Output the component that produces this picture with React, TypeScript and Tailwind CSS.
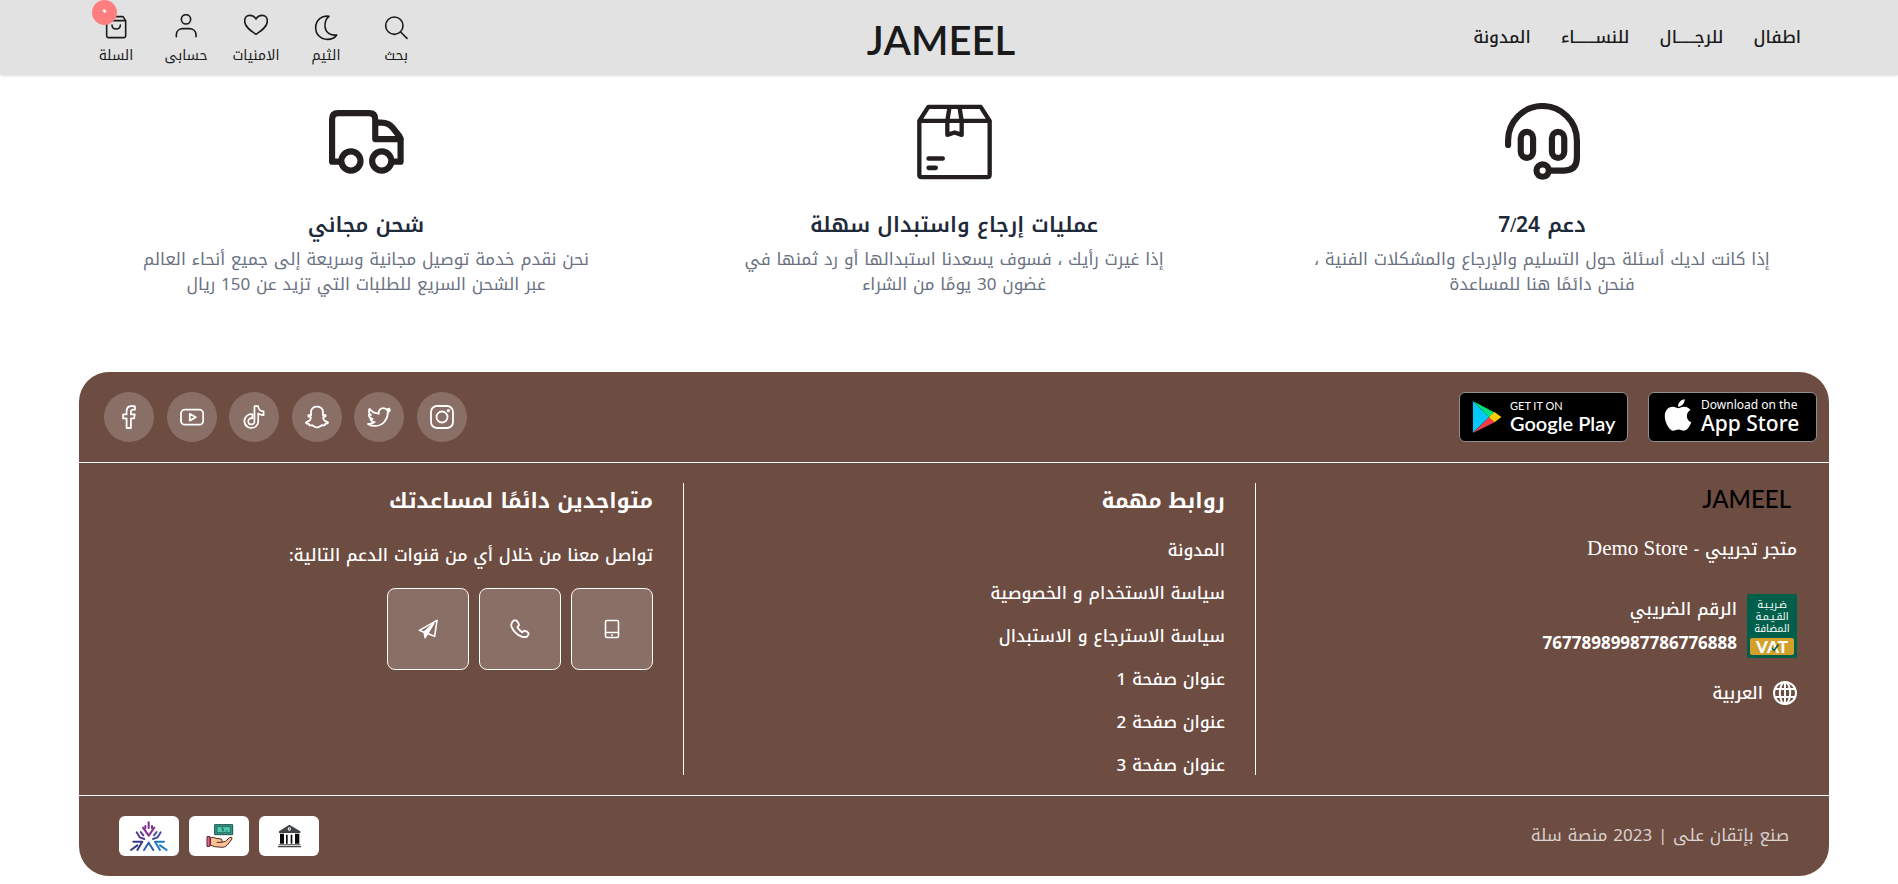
import type { ReactNode } from 'react';
import { FaApple, FaFacebookF, FaSnapchatGhost, FaTwitter } from 'react-icons/fa';
import { SiTiktok } from 'react-icons/si';

const menu = ['اطفال', 'للرجــــــال', 'للنســـــــاء', 'المدونة'];

const links = [
  'المدونة',
  'سياسة الاستخدام و الخصوصية',
  'سياسة الاسترجاع و الاستبدال',
  'عنوان صفحة 1',
  'عنوان صفحة 2',
  'عنوان صفحة 3',
];

function ToolIcon({ box, children }: { box: string; children: ReactNode }) {
  return (
    <svg viewBox={box} className="h-7 w-6" fill="none" stroke="currentColor" strokeWidth="4.8" strokeLinecap="round" strokeLinejoin="round" aria-hidden="true">
      {children}
    </svg>
  );
}

const tools: { label: string; icon: ReactNode; badge?: string }[] = [
  {
    label: 'بحث',
    icon: (
      <ToolIcon box="942 40 72 84">
        <circle cx="973" cy="75" r="26" />
        <path d="M992 94 L1011 113" />
      </ToolIcon>
    ),
  },
  {
    label: 'الثيم',
    icon: (
      <ToolIcon box="733 40 72 84">
        <path d="M778 47 C757 43 738 58 738 81 C738 101 753 116 773 116 C786 116 796 111 801 103 C782 105 768 96 766 78 C765 66 769 54 778 47 Z" />
      </ToolIcon>
    ),
  },
  {
    label: 'الامنيات',
    icon: (
      <ToolIcon box="524 38 72 84">
        <path d="M560 99 C540 86 526 75 526 59 C526 48 533 42 541 42 C549 42 556 46 560 53 C564 46 571 42 579 42 C587 42 594 48 594 59 C594 75 580 86 560 99 Z" />
      </ToolIcon>
    ),
  },
  {
    label: 'حسابى',
    icon: (
      <ToolIcon box="313 38 72 84">
        <circle cx="349" cy="54" r="14" />
        <path d="M320 106 V100 C320 89 329 82 340 82 H358 C370 82 379 89 379 100 V106" />
      </ToolIcon>
    ),
  },
  {
    label: 'السلة',
    badge: '٠',
    icon: (
      <ToolIcon box="103 40 72 84">
        <path d="M111 60 L119 48 H160 L168 60 V106 Q168 111 163 111 H116 Q111 111 111 106 Z M111 60 H168 M127 73 C127 89 152 89 152 73" />
      </ToolIcon>
    ),
  },
];

const features = [
  {
    title: (
      <>
        دعم 7<span className="font-['Liberation_Serif']">/</span>24
      </>
    ),
    text: 'إذا كانت لديك أسئلة حول التسليم والإرجاع والمشكلات الفنية ، فنحن دائمًا هنا للمساعدة',
    icon: (
      <svg viewBox="652 41 219 227" className="h-[78px] w-[75px]" fill="none" stroke="#231f1e" strokeWidth="18" strokeLinecap="round" aria-hidden="true">
        <path d="M661 163 V150 A100 100 0 0 1 862 150 V200 Q862 238 825 238 H788" />
        <circle cx="762" cy="238" r="18" />
        <rect x="698" y="125" width="36" height="76" rx="18" />
        <rect x="789" y="125" width="36" height="76" rx="18" />
      </svg>
    ),
  },
  {
    title: 'عمليات إرجاع واستبدال سهلة',
    text: 'إذا غيرت رأيك ، فسوف يسعدنا استبدالها أو رد ثمنها في غضون 30 يومًا من الشراء',
    icon: (
      <svg viewBox="650 40 225 227" className="h-[76px] w-[75px]" fill="none" stroke="#231f1e" strokeWidth="13" strokeLinecap="round" strokeLinejoin="round" aria-hidden="true">
        <path d="M657 90 V252 Q657 259 664 259 H861 Q868 259 868 252 V90 Z L684 48 H841 L868 90" />
        <path d="M747 52 L741 90 V132 L763 125 L784 132 V90 L778 52" />
        <path d="M685 203 H727 M685 231 H706" strokeWidth="14" />
      </svg>
    ),
  },
  {
    title: 'شحن مجاني',
    text: 'نحن نقدم خدمة توصيل مجانية وسريعة إلى جميع أنحاء العالم عبر الشحن السريع للطلبات التي تزيد عن 150 ريال',
    icon: (
      <svg viewBox="663 41 219 225" className="h-[78px] w-[75px]" fill="none" stroke="#231f1e" strokeWidth="18" strokeLinecap="round" strokeLinejoin="round" aria-hidden="true">
        <path d="M697 211 H672 V87 Q672 69 690 69 H780 Q798 69 798 87 V145 H872" />
        <path d="M800 97 H816 Q838 97 850 113 L868 136 Q872 141 872 149 V211 H848" />
        <circle cx="727" cy="209" r="28" />
        <circle cx="817" cy="209" r="28" />
      </svg>
    ),
  },
];

const outline = { fill: 'none', stroke: 'currentColor', strokeLinejoin: 'round' as const };

const socials = [
  {
    name: 'Instagram',
    icon: (
      <svg viewBox="0 0 24 24" className="size-6" strokeWidth="1.8" {...outline} aria-hidden="true">
        <rect x="1" y="1" width="22" height="22" rx="6" />
        <circle cx="12" cy="12" r="5.5" />
        <circle cx="18.4" cy="5.6" r="0.7" fill="currentColor" />
      </svg>
    ),
  },
  { name: 'Twitter', icon: <FaTwitter className="size-[22px] overflow-visible" strokeWidth="42" {...outline} /> },
  { name: 'Snapchat', icon: <FaSnapchatGhost className="size-[22px] overflow-visible" strokeWidth="42" {...outline} /> },
  { name: 'TikTok', icon: <SiTiktok className="size-[22px] overflow-visible" strokeWidth="1.9" {...outline} /> },
  {
    name: 'YouTube',
    icon: (
      <svg viewBox="0 0 24 24" className="size-6" strokeWidth="1.8" {...outline} aria-hidden="true">
        <rect x="1" y="4.7" width="22.2" height="15" rx="4" />
        <path d="M9.8 8.8 L15.8 12.2 L9.8 15.6 Z" />
      </svg>
    ),
  },
  { name: 'Facebook', icon: <FaFacebookF className="size-[22px] overflow-visible" strokeWidth="42" {...outline} /> },
];

const contacts = [
  {
    name: 'جوال',
    icon: (
      <svg viewBox="0 0 20 20" className="size-5" strokeWidth="1.6" {...outline} aria-hidden="true">
        <rect x="3.5" y="1.5" width="13" height="17" rx="1.5" />
        <path d="M3.5 13.5 H16.5 M9.2 16.1 H10.8" />
      </svg>
    ),
  },
  {
    name: 'هاتف',
    icon: (
      <svg viewBox="722 445 60 60" className="size-5" strokeWidth="5.5" {...outline} aria-hidden="true">
        <path d="M734 449 L741 449 Q748 456 749 462 Q748 466 744 470 Q750 480 759 485 Q762 481 766 480 Q773 482 778 488 Q778 494 773 498 Q765 501 757 498 Q735 489 726 467 Q724 456 734 449 Z" />
      </svg>
    ),
  },
  {
    name: 'تيليجرام',
    icon: (
      <svg viewBox="445 445 60 60" className="size-5" strokeWidth="4.8" {...outline} aria-hidden="true">
        <path d="M502 449 L449 479 L463 485 L492 459 L472 488 L495 497 Z" />
        <path d="M464 486 L488 464 L474 489 L466 501 Z" fill="currentColor" />
      </svg>
    ),
  },
];

const payments = [
  {
    name: 'حوالة بنكية',
    icon: (
      <svg viewBox="567 102 180 120" className="h-10 w-15" aria-hidden="true">
        <path d="M627 148 L658 128 L691 148 V153 H627 Z" fill="#3f4447" />
        <circle cx="658" cy="141" r="5" fill="#fff" />
        <circle cx="658" cy="141" r="2" fill="#3f4447" />
        <path d="M630 155 H642 V185 H630 Z M648 158 H653 V185 H648 Z M662 158 H667 V185 H662 Z M675 155 H688 V185 H675 Z" fill="#0a0a0a" />
        <path d="M626 187 H691 V190 H626 Z M624 192 H693 V196 H624 Z" fill="#3f4447" />
      </svg>
    ),
  },
  {
    name: 'الدفع عند الاستلام',
    icon: (
      <svg viewBox="357 102 180 120" className="h-10 w-15" strokeLinejoin="round" aria-hidden="true">
        <rect x="434" y="128" width="54" height="30" fill="#2f9c8c" stroke="#1f4f48" strokeWidth="3" />
        <rect x="441" y="134" width="40" height="18" fill="#52c9b6" stroke="#1f4f48" strokeWidth="2" />
        <path d="M460 138 H456 V142 H460 V147 H456 M466 147 H473" fill="none" stroke="#173b36" strokeWidth="2" />
        <path d="M421 168 Q430 163 438 169 L454 171 Q459 176 454 181 L466 178 L480 166 Q487 164 486 171 L471 190 Q465 196 457 196 L434 194 L421 189 Z" fill="#fdbf93" stroke="#4a2a20" strokeWidth="3" />
        <path d="M454 181 H440" stroke="#4a2a20" strokeWidth="3" />
        <rect x="411" y="164" width="9" height="29" fill="#f2648b" stroke="#4a2030" strokeWidth="3" />
      </svg>
    ),
  },
  {
    name: 'مدى',
    icon: (
      <svg viewBox="147 102 180 120" className="h-10 w-15" fill="none" strokeWidth="6" strokeLinecap="round" strokeLinejoin="round" aria-hidden="true">
        <path d="M236 121 V138 M226 132 V139 M246 132 V139" stroke="#7b2a8c" />
        <path d="M219 137 L236 161 L253 137" stroke="#8a3191" />
        <path d="M200 151 L209 166 L223 171 M212 150 L220 160" stroke="#5b3a94" />
        <path d="M272 151 L263 166 L249 171 M260 150 L252 160" stroke="#4a4ba3" />
        <path d="M190 179 L217 179 L202 204 M183 204 L202 190" stroke="#3a3a85" />
        <path d="M282 179 H255 L270 204 M290 204 L270 190" stroke="#1b7cc4" />
        <path d="M222 204 L236 182 L250 204" stroke="#2b5fa8" />
      </svg>
    ),
  },
];

function Header() {
  return (
    <header className="relative z-10 flex h-[75px] items-center justify-between bg-[#e2e2e2] pr-[97px] pl-[81px] text-[#1a1a1a] shadow-sm">
      <nav className="flex flex-1 items-center gap-[30px] text-[17px] font-medium">
        {menu.map((item) => (
          <a key={item} href="#">{item}</a>
        ))}
      </nav>
      <a href="#" dir="ltr" className="pt-1 font-['Lato'] text-[40px] leading-[50px] font-semibold">JAMEEL</a>
      <div className="flex flex-1 items-start justify-end">
        {tools.map((tool) => (
          <button key={tool.label} type="button" className="relative flex w-[70px] flex-col items-center gap-1 pt-1 text-[14px] leading-5">
            {tool.icon}
            <span>{tool.label}</span>
            {tool.badge && (
              <span className="absolute -top-2.5 left-[11px] flex size-[25px] items-center justify-center rounded-full bg-[#fd7e7e] text-[14px] font-bold text-white">
                {tool.badge}
              </span>
            )}
          </button>
        ))}
      </div>
    </header>
  );
}

function Features() {
  return (
    <section className="grid grid-cols-3 gap-3.5 pt-7 pr-[69px] pl-[79px]">
      {features.map((feature, i) => (
        <article key={i} className="flex flex-col items-center px-10 text-center">
          <div className="flex h-[78px] items-center">{feature.icon}</div>
          <h2 className="mt-[26px] text-[21px] leading-9 font-semibold text-gray-800">{feature.title}</h2>
          <p className="mt-1 max-w-[460px] text-[17px] leading-[25px] text-gray-500">{feature.text}</p>
        </article>
      ))}
    </section>
  );
}

function GooglePlay() {
  return (
    <a href="#" dir="ltr" className="flex h-[50px] w-[169px] items-center gap-2 rounded-md border border-[#8f8f8f] bg-black pl-3 text-white">
      <svg viewBox="155 122 88 98" className="h-8 w-[30px] shrink-0" aria-hidden="true">
        <path d="M156 123 V219 L206 171 Z" fill="#00c8f8" />
        <path d="M156 122 L206 171 L222 157 Z" fill="#00e27a" />
        <path d="M156 220 L206 171 L222 187 Z" fill="#f93b48" />
        <path d="M222 156 L243 171 L222 187 L205 171 Z" fill="#ffcb05" />
      </svg>
      <span className="flex flex-col whitespace-nowrap font-['Lato']">
        <span className="text-[11px] leading-3">GET IT ON</span>
        <span className="text-[20px] leading-[22px] font-semibold">Google Play</span>
      </span>
    </a>
  );
}

function AppStore() {
  return (
    <a href="#" dir="ltr" className="flex h-[50px] w-[169px] items-center gap-2 rounded-md border border-[#8f8f8f] bg-black pl-3.5 text-white">
      <FaApple className="-mt-1 h-9 w-[30px] shrink-0" />
      <span className="flex flex-col whitespace-nowrap font-['Noto_Sans']">
        <span className="text-[12px] leading-3">Download on the</span>
        <span className="text-[21px] leading-6 font-medium">App Store</span>
      </span>
    </a>
  );
}

function VatBadge() {
  return (
    <div className="flex h-16 w-[50px] flex-col justify-between rounded-xs bg-[#005f4b] p-[3px] text-center text-white">
      <p className="pt-0.5 text-[10px] leading-3">
        ضـريـبـة
        <br />
        القـيـمـة
        <br />
        المضافة
      </p>
      <p dir="ltr" className="relative rounded-xs bg-[#d3a02c] font-['Lato'] text-[17px] leading-[17px] font-black">
        VAT
        <svg viewBox="0 0 8 8" className="absolute top-1.5 left-[21px] size-2" fill="none" stroke="#005f4b" strokeWidth="1.6" aria-hidden="true">
          <path d="M1 4 L3 6.5 L7.5 0.5" />
        </svg>
      </p>
    </div>
  );
}

function Footer() {
  return (
    <footer className="mt-[75px] mr-[69px] ml-[79px] rounded-[30px] bg-[#6d4c41] text-white">
      <div className="flex items-center justify-between border-b border-white py-5 pr-3 pl-[25px]">
        <div className="flex gap-5">
          <AppStore />
          <GooglePlay />
        </div>
        <div className="flex w-[363px] justify-between">
          {socials.map((social) => (
            <a key={social.name} href="#" aria-label={social.name} className="flex size-[50px] items-center justify-center rounded-full bg-white/20">
              {social.icon}
            </a>
          ))}
        </div>
      </div>

      <div className="grid grid-cols-[573fr_572fr_605fr] border-b border-white py-5">
        <div className="px-8">
          <p dir="ltr" className="pt-1 pr-1.5 text-right font-['Lato'] text-[24px] leading-6 font-medium text-black">JAMEEL</p>
          <p className="mt-5 text-[17px] leading-[34px] font-medium">
            متجر تجريبي - <span className="font-['Liberation_Serif'] text-[21px] font-normal">Demo Store</span>
          </p>
          <div className="mt-[26px] flex items-center gap-2.5">
            <VatBadge />
            <div className="text-[17px] leading-[34px] font-medium">
              <p>الرقم الضريبي</p>
              <p className="font-['Open_Sans'] font-bold">76778989987786776888</p>
            </div>
          </div>
          <button type="button" className="mt-4 flex items-center gap-2.5 text-[17px] leading-[34px] font-medium">
            <svg viewBox="0 0 24 24" className="size-6" strokeWidth="2" {...outline} aria-hidden="true">
              <circle cx="12" cy="12" r="11" />
              <ellipse cx="12" cy="12" rx="5.2" ry="11" />
              <path d="M12 1 V23 M2.2 8 H21.8 M2.2 16 H21.8" />
            </svg>
            العربية
          </button>
        </div>

        <div className="border-r border-white px-[30px]">
          <h3 className="text-[21px] leading-9 font-bold">روابط مهمة</h3>
          <ul className="mt-[21px] flex flex-col gap-[23px]">
            {links.map((link) => (
              <li key={link} className="text-[17px] leading-5 font-medium">
                <a href="#">{link}</a>
              </li>
            ))}
          </ul>
        </div>

        <div className="border-r border-white px-[30px]">
          <h3 className="text-[21px] leading-9 font-bold">متواجدين دائمًا لمساعدتك</h3>
          <p className="mt-[19px] text-[17px] leading-[34px] font-medium">تواصل معنا من خلال أي من قنوات الدعم التالية:</p>
          <div className="mt-4 flex gap-2.5">
            {contacts.map((contact) => (
              <a key={contact.name} href="#" aria-label={contact.name} className="flex size-[82px] items-center justify-center rounded-lg border border-white bg-white/20">
                {contact.icon}
              </a>
            ))}
          </div>
        </div>
      </div>

      <div className="flex h-20 items-center justify-between px-10">
        <p className="text-[17px] text-white/75">صنع بإتقان على | 2023 منصة سلة</p>
        <ul className="flex gap-2.5">
          {payments.map((payment) => (
            <li key={payment.name} title={payment.name} className="rounded-md bg-white">
              {payment.icon}
            </li>
          ))}
        </ul>
      </div>
    </footer>
  );
}

export default function App() {
  return (
    <div dir="rtl" lang="ar" className="min-h-screen bg-white font-['Noto_Kufi_Arabic','Noto_Sans',sans-serif]">
      <Header />
      <Features />
      <Footer />
    </div>
  );
}
